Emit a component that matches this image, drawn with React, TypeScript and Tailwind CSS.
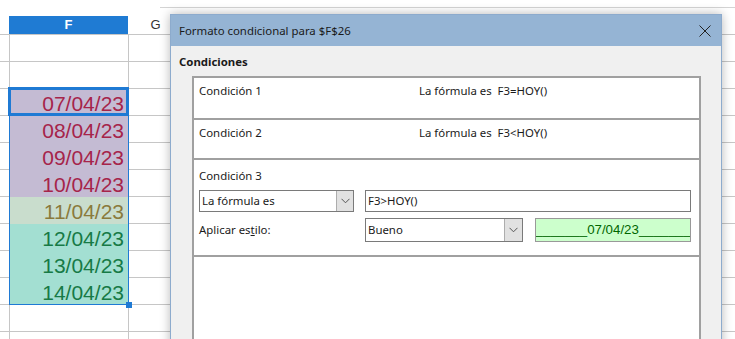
import React from 'react'

type Cell = { text?: string; bg?: string; color?: string }

const rows: Cell[] = [
  {},
  {},
  { text: '07/04/23', bg: 'bg-[#c4bbd3]', color: 'text-[#a6244a]' },
  { text: '08/04/23', bg: 'bg-[#c4bbd3]', color: 'text-[#a6244a]' },
  { text: '09/04/23', bg: 'bg-[#c4bbd3]', color: 'text-[#a6244a]' },
  { text: '10/04/23', bg: 'bg-[#c4bbd3]', color: 'text-[#a6244a]' },
  { text: '11/04/23', bg: 'bg-[#c9ddcd]', color: 'text-[#8a7a3c]' },
  { text: '12/04/23', bg: 'bg-[#a3dfd2]', color: 'text-[#177a46]' },
  { text: '13/04/23', bg: 'bg-[#a3dfd2]', color: 'text-[#177a46]' },
  { text: '14/04/23', bg: 'bg-[#a3dfd2]', color: 'text-[#177a46]' },
  {},
  {},
]

function Chevron() {
  return (
    <svg width="9" height="6" viewBox="0 0 9 6" fill="none">
      <path d="M0.5 0.8 L4.5 4.8 L8.5 0.8" stroke="#555" strokeWidth="1" />
    </svg>
  )
}

function Sheet() {
  return (
    <div className="w-[735px] h-[339px] overflow-hidden bg-white font-['Liberation_Sans',sans-serif]">
      <div className="flex h-[16px]">
        <div className="w-[160px]" />
        <div className="flex-1 h-[8px] border-b border-[#d4d4d4]" />
      </div>
      <div className="flex h-[19px] border-b border-[#c6c6c6] text-[13px]">
        <div className="w-[9px]" />
        <div className="w-[119px] bg-[#1f7bd3] text-white font-bold flex items-center justify-center">
          F
        </div>
        <div className="w-[55px] text-[#333] flex items-center justify-center">G</div>
        <div className="flex-1" />
      </div>
      {rows.map((r, i) => (
        <div key={i} className="flex h-[27px]">
          <div className="w-[10px] border-r border-b border-[#c6c6c6]" />
          <div
            className={`w-[119px] border-r border-b border-[#c6c6c6] flex items-end justify-end pr-[4px] text-[21px] leading-[22px] ${
              r.bg ? `${r.bg} border-b-transparent` : ''
            } ${r.color ?? ''}`}
          >
            {r.text}
          </div>
          <div className="w-[55px] border-r border-b border-[#c6c6c6]" />
          <div className="flex-1 border-b border-[#c6c6c6]" />
        </div>
      ))}
    </div>
  )
}

function Dialog() {
  return (
    <div className="absolute left-[170px] top-[14px] w-[552px] h-[340px] bg-[#f0f0f0] border border-[#8dabcd] shadow-[0_0_10px_rgba(0,0,0,0.28)] font-['Noto_Sans',sans-serif] text-[11.4px] text-[#1a1a1a]">
      <div className="h-[31px] bg-[#95b4d4] flex items-center justify-between pl-[8px] pr-[10px]">
        <span>Formato condicional para $F$26</span>
        <svg width="12" height="12" viewBox="0 0 12 12" fill="none">
          <path d="M0.5 0.5 L11.5 11.5 M11.5 0.5 L0.5 11.5" stroke="#222" strokeWidth="1" />
        </svg>
      </div>
      <div className="pl-[8px] mt-[8px] h-[16px] leading-[16px] font-bold">Condiciones</div>
      <div className="ml-[21px] mt-[6px] w-[509px] h-[300px] bg-white border-2 border-[#a0a0a0]">
        <div className="h-[42px] border-b-2 border-[#a0a0a0] flex pt-[5px] pl-[5px] leading-[16px]">
          <span className="w-[220px]">Condición 1</span>
          <span>La fórmula es&nbsp; F3=HOY()</span>
        </div>
        <div className="h-[40px] border-b-2 border-[#a0a0a0] flex pt-[5px] pl-[5px] leading-[16px]">
          <span className="w-[220px]">Condición 2</span>
          <span>La fórmula es&nbsp; F3&lt;HOY()</span>
        </div>
        <div className="h-[97px] border-b-2 border-[#a0a0a0] pt-[8px] pl-[5px] leading-[16px]">
          <div>Condición 3</div>
          <div className="flex mt-[6px] h-[22px] gap-[11px]">
            <div className="w-[155px] h-full bg-white border border-[#7a7a7a] flex items-center justify-between">
              <span className="pl-[2px]">La fórmula es</span>
              <div className="w-[17px] h-full bg-[#e1e1e1] border-l border-[#adadad] flex items-center justify-center">
                <Chevron />
              </div>
            </div>
            <div className="w-[326px] h-full bg-white border border-[#7a7a7a] flex items-center pl-[2px]">
              F3&gt;HOY()
            </div>
          </div>
          <div className="flex mt-[6px] h-[24px] items-center">
            <span className="w-[166px]">
              Aplicar es<span className="underline">t</span>ilo:
            </span>
            <div className="w-[158px] h-full bg-white border border-[#7a7a7a] flex items-center justify-between">
              <span className="pl-[2px]">Bueno</span>
              <div className="w-[18px] h-full bg-[#e1e1e1] border-l border-[#adadad] flex items-center justify-center">
                <Chevron />
              </div>
            </div>
            <div className="ml-[12px] w-[156px] h-full bg-[#ccffcc] border border-[#999] flex items-center justify-center overflow-hidden font-['Liberation_Sans',sans-serif] text-[13.3px] text-[#006600] whitespace-nowrap">
              _______07/04/23_______
            </div>
          </div>
        </div>
      </div>
    </div>
  )
}

export default function App() {
  return (
    <div className="relative w-[735px] h-[339px] overflow-hidden">
      <Sheet />
      <div className="absolute left-[9px] top-[88px] w-[120px] h-[217px] border border-[#1f7ad4]" />
      <div className="absolute left-[8px] top-[87px] w-[121px] h-[29px] border-[3px] border-[#1f7ad4]" />
      <div className="absolute left-[126px] top-[302px] w-[6px] h-[6px] bg-[#1f7ad4]" />
      <Dialog />
    </div>
  )
}
